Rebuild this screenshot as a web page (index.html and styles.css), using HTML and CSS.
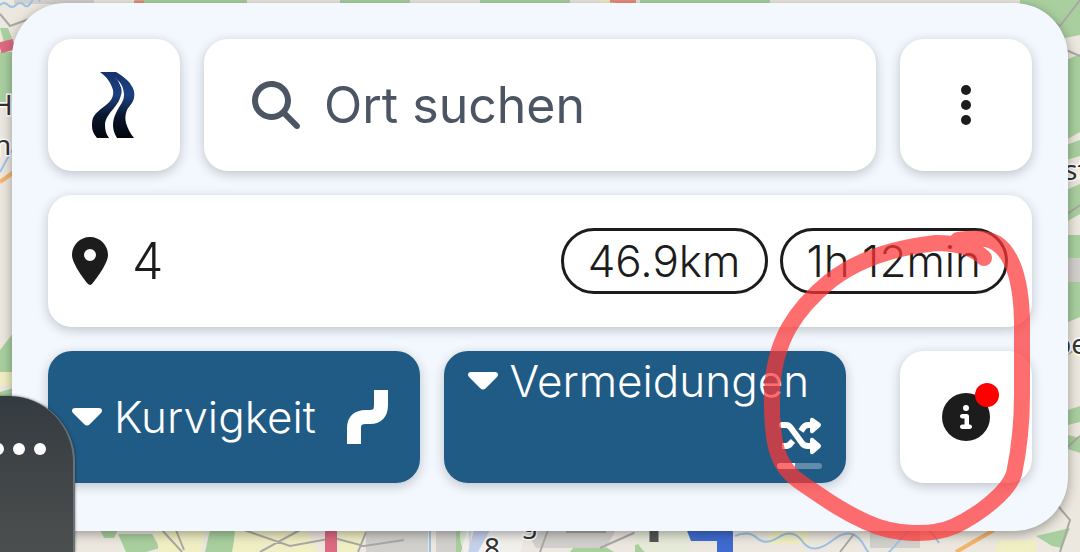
FILE: index.html
```html
<!DOCTYPE html>
<html lang="de">
<head>
    <meta charset="UTF-8">
    <meta name="viewport" content="width=device-width, initial-scale=1.0">
    <title>Routenplaner</title>
    <link rel="stylesheet" href="styles.css">
</head>
<body>
    <svg class="map" viewBox="0 0 1080 552" preserveAspectRatio="none" aria-hidden="true">
        <rect width="1080" height="552" fill="#ece8df"/>
        <!-- woods -->
        <g fill="#a9cf9f">
            <path d="M0 52h14v50H0zM0 350l14-18v48l-14-8zM0 392l14-4v20H0zM0 28l8 0 4 10-8 4z"/>
            <path d="M135 0h112v6H135zM340 0h70v6h-70zM480 0h90v6h-90zM640 0h130v6H640z"/>
            <path d="M1020 0h60v35l-20 4-12-18-28-14zM1066 60l14-6v78l-14 8zM1066 145l14-5v16l-14 4zM1066 190l14-6v30l-14 8zM1066 235h14v82l-14 6zM1068 410l12-4v16l-12 3zM1068 435l12 3v15l-12-4zM1036 536l34-8-8 20-10-2z"/>
            <path d="M100 530h18l-4 8h-10zM118 534h34l8 14-14 4h-20zM210 530h25l-2 22h-28zM270 530h28l-10 10-18-2zM455 530h12l-6 22h-8zM570 552l8-10 26 4 10 6zM635 545l30-8 20 15h-50z"/>
        </g>
        <g fill="#f0efc4">
            <path d="M155 530h50l-4 22h-42zM236 530h70l12 22h-86zM340 530h26l-8 22h-20zM650 530h28l8 16-30 2zM770 530h38v14h-40zM1000 540h36v12h-42z"/>
            <path d="M0 372h14v14H0zM1072 170h8v10h-8zM1072 345h8v12h-8zM600 0h28v5h-28z"/>
        </g>
        <g fill="#d2d0cc">
            <path d="M366 530h62v22h-62zM436 530h20v22h-20zM526 530h90l-10 18h-70zM870 530h50v18h-50zM14 0h80v4H14zM1068 258h12v24h-12z"/>
        </g>
        <!-- water -->
        <g fill="none" stroke="#9cc1e6" stroke-width="2">
            <path d="M0 5q4-4 8 0t8 0 8 0 8-4 8 1"/>
            <path d="M735 536q14-6 22 2t22-1 24 5 30-2 32 7 34-6 40 2"/>
            <path d="M430 530v22M0 172l12-22"/>
        </g>
        <!-- minor roads -->
        <g fill="none" stroke="#aaa8a5" stroke-width="2">
            <path d="M0 14l10 12 22-8M162 530l20 22M176 530l8 20M244 530l46 16 44-8 30 8 40-6M366 532l-8 20M300 530l-40 22M470 530v22M548 530l-8 22M566 532h40M600 548l36-16M840 552l14-18M1058 506l12 14-10 32M1066 355l14-8M1066 215l14-10M1066 50l14 6M1064 450l16-14M1040 14l20 12 20-26"/>
        </g>
        <!-- main roads -->
        <path d="M331 528v24" stroke="#dc6a80" stroke-width="12"/>
        <path d="M0 48l14-4" stroke="#dc6a80" stroke-width="11"/>
        <path d="M134 3h10M610 0l26 2" stroke="#ec8d7b" stroke-width="5"/>
        <path d="M956 552l38-22M0 182l14-10" stroke="#f2b56c" stroke-width="4"/>
        <circle cx="492" cy="536" r="32" fill="#f4f3f2" opacity=".7"/>
        <path d="M474 530l-6 22h10l12-22z" fill="#c5d0ea"/>
        <circle cx="666" cy="528" r="32" fill="#e6ead8"/>
        <path d="M654 528v14" stroke="#555" stroke-width="9"/>
        <path d="M686 528h42q5 0 5 5v19h-16v-11h-26z" fill="#3f6bd0"/>
        <!-- place names -->
        <g class="map-labels">
            <text x="-8" y="115">H</text>
            <text x="-6" y="155">n</text>
            <text x="1064" y="180">st</text>
            <text x="1054" y="354">be</text>
            <text x="484" y="558">8</text>
            <text x="521" y="532">g</text>
        </g>
    </svg>

    <main class="panel">
        <div class="row">
            <button class="card square" aria-label="Startseite">
                <svg width="44" height="66" viewBox="0 0 44 66" aria-hidden="true">
                    <defs>
                        <linearGradient id="road" gradientUnits="userSpaceOnUse" x1="0" y1="0" x2="0" y2="66">
                            <stop offset="0" stop-color="#17336e"/>
                            <stop offset=".35" stop-color="#1d4080"/>
                            <stop offset=".65" stop-color="#0b1730"/>
                            <stop offset="1" stop-color="#02050b"/>
                        </linearGradient>
                    </defs>
                    <path fill="url(#road)" d="M8 0H24C32 5 37 9 39 13C42 17 43 21 42 26C41 31 37 34 35 38C33 43 33 47 34 51C36 57 38 61 42 66H25C22 61 21 57 21 53C21 49 22 45 24 41C27 34 32 30 32 23C32 15 28 9 22 5C26 8 27 10 28 13C30 17 30 20 29 23C28 28 25 32 22 36C17 42 13 47 13 53C13 58 14 62 17 66H5C2 62 0 59 0 54C0 51 0 49 1 46C3 41 9 37 14 33C19 29 22 25 21 18C19 11 15 5 8 0Z"/>
                </svg>
            </button>
            <label class="card search">
                <svg width="48" height="48" viewBox="0 0 512 512" fill="#4b5563" aria-hidden="true">
                    <path d="M416 208c0 45.900-14.900 88.300-40 122.700L502.600 457.400c12.500 12.500 12.500 32.800 0 45.300s-32.800 12.500-45.300 0L330.700 376c-34.400 25.200-76.800 40-122.700 40C93.100 416 0 322.900 0 208S93.100 0 208 0S416 93.100 416 208zM208 352a144 144 0 1 0 0-288 144 144 0 1 0 0 288z"/>
                </svg>
                <input type="text" placeholder="Ort suchen" aria-label="Ort suchen">
            </label>
            <button class="card square" aria-label="Menü">
                <svg width="12" height="40" viewBox="0 0 12 40" fill="#1c1c1c" aria-hidden="true">
                    <circle cx="6" cy="5" r="5"/>
                    <circle cx="6" cy="20" r="5"/>
                    <circle cx="6" cy="35" r="5"/>
                </svg>
            </button>
        </div>

        <div class="card route">
            <svg width="36" height="48" viewBox="0 0 384 512" fill="#1c1c1c" aria-hidden="true">
                <path d="M215.700 499.200C267 435 384 279.400 384 192C384 86 298 0 192 0S0 86 0 192c0 87.400 117 243 168.300 307.200c12.300 15.300 35.100 15.300 47.400 0zM192 128a64 64 0 1 1 0 128 64 64 0 1 1 0-128z"/>
            </svg>
            <span class="count">4</span>
            <span class="pill">46.9km</span>
            <span class="pill">1h 12min</span>
        </div>

        <div class="row">
            <div class="filters">
                <button class="card filter">
                    <svg width="30" height="18" viewBox="0 0 30 18" fill="#fff" aria-hidden="true">
                        <path d="M3 0H27Q30 0 30 3Q30 4 28 6L18 16Q15 19 12 16L2 6Q0 4 0 3Q0 0 3 0Z"/>
                    </svg>
                    <span>Kurvigkeit</span>
                    <svg class="mode" width="44" height="54" viewBox="0 0 44 54" fill="none" aria-hidden="true">
                        <path d="M8 54V38Q8 27 20 27H24Q35 27 35 15V0" stroke="#fff" stroke-width="14"/>
                    </svg>
                </button>
                <button class="card filter stacked">
                    <svg width="30" height="18" viewBox="0 0 30 18" fill="#fff" aria-hidden="true">
                        <path d="M3 0H27Q30 0 30 3Q30 4 28 6L18 16Q15 19 12 16L2 6Q0 4 0 3Q0 0 3 0Z"/>
                    </svg>
                    <span>Vermeidungen</span>
                    <span class="avoid">
                        <svg width="44" height="38" viewBox="0 0 44 38" aria-hidden="true">
                            <g fill="none" stroke="#fff" stroke-width="6" stroke-linecap="round" stroke-linejoin="round">
                                <path d="M4 8H8Q11 8 13 11L24 26Q26 29 30 29H34"/>
                                <path d="M4 29H8Q11 29 13 26L15 24" stroke-linecap="butt"/>
                                <path d="M23 14L25 11Q27 8 30 8H34" stroke-linecap="butt"/>
                            </g>
                            <path fill="#fff" d="M32 3Q32 0 35 1L42 6Q44 8 42 10L35 16Q32 17 32 14ZM32 23Q32 20 35 21L42 27Q44 29 42 31L35 37Q32 38 32 35Z"/>
                        </svg>
                        <span class="level"><span class="level-fill"></span></span>
                    </span>
                </button>
            </div>
            <button class="card square" aria-label="Informationen">
                <span class="info">
                    <svg width="48" height="48" viewBox="0 0 512 512" aria-hidden="true">
                        <circle cx="256" cy="256" r="256" fill="#1c1c1c"/>
                        <path fill="#fff" d="M216 336h24V272H216c-13.300 0-24-10.700-24-24s10.700-24 24-24h48c13.300 0 24 10.700 24 24v88h8c13.300 0 24 10.700 24 24s-10.700 24-24 24H216c-13.300 0-24-10.700-24-24s10.700-24 24-24zM256 128a32 32 0 1 1 0 64 32 32 0 1 1 0-64z"/>
                    </svg>
                    <span class="badge"></span>
                </span>
            </button>
        </div>
    </main>

    <!-- floating side handle -->
    <div class="handle">
        <span class="dot"></span>
        <span class="dot"></span>
        <span class="dot"></span>
    </div>

    <!-- marker stroke around the info button -->
    <svg class="marker" viewBox="0 0 1080 552" preserveAspectRatio="none" aria-hidden="true">
        <path d="M984 258C975 249 958 243 936 243C900 247 862 256 830 281C796 309 774 340 772 392C771 448 778 468 803 484C828 501 842 511 866 522C896 536 932 536 955 526C980 514 1008 492 1014 474C1019 450 1022 420 1022 395V320C1021 282 1013 254 996 243C986 237 970 238 958 240"/>
    </svg>
</body>
</html>
```
FILE: styles.css
```css
* {
    box-sizing: border-box;
}

body {
    margin: 0;
    min-height: 100vh;
    padding: 3px 12px 21px;
    position: relative;
    overflow: hidden;
    font-family: Inter, "Noto Sans", sans-serif;
    font-weight: 300;
    color: #1c1c1c;
}

button,
input {
    font: inherit;
    color: inherit;
    border: none;
}

button {
    cursor: pointer;
}

svg {
    flex-shrink: 0;
}

.map,
.marker {
    position: absolute;
    top: 0;
    left: 0;
    width: 100%;
    height: 100%;
}

.map {
    z-index: -1;
}

.map-labels {
    font-family: "Noto Sans", sans-serif;
    font-size: 28px;
    font-weight: 400;
    fill: #333;
    stroke: #fff;
    stroke-width: 3px;
    paint-order: stroke;
}

.marker {
    pointer-events: none;
}

.marker path {
    fill: none;
    stroke: rgba(255, 54, 54, 0.72);
    stroke-width: 16px;
    stroke-linecap: round;
    stroke-linejoin: round;
}

.panel {
    display: flex;
    flex-direction: column;
    gap: 24px;
    padding: 36px 36px 48px;
    background-color: #f3f8ff;
    border-radius: 54px;
    box-shadow: 0 3px 12px rgba(0, 0, 0, 0.35);
}

.row {
    display: flex;
    gap: 24px;
}

.card {
    height: 132px;
    background-color: #fff;
    border-radius: 24px;
    box-shadow: 0 3px 12px rgba(0, 0, 0, 0.22);
}

.square {
    display: flex;
    flex: 0 0 132px;
    align-items: center;
    justify-content: center;
    padding: 0;
}

.search {
    display: flex;
    flex: 1;
    align-items: center;
    gap: 24px;
    min-width: 0;
    padding: 0 48px;
    font-size: 50px;
    font-weight: 400;
    color: #4b5563;
}

.search input {
    flex: 1;
    min-width: 0;
    padding: 0;
    background: none;
    outline: none;
}

.search input::placeholder {
    color: #4b5563;
    opacity: 1;
}

.route {
    display: flex;
    align-items: center;
    gap: 12px;
    padding: 0 24px;
}

.count {
    margin-right: auto;
    padding-left: 12px;
    font-size: 50px;
}

.pill {
    padding: 0 24px;
    border: 3px solid #1c1c1c;
    border-radius: 33px;
    font-size: 44px;
    line-height: 60px;
}

.filters {
    display: grid;
    flex: 1;
    grid-template-columns: 12fr 13fr;
    gap: 24px;
    margin-right: 30px;
}

.filter {
    display: flex;
    align-items: center;
    gap: 12px;
    padding: 0 24px;
    background-color: #1f5b85;
    color: #fff;
    font-size: 44px;
    line-height: 60px;
}

.mode {
    margin: 0 6px 0 auto;
}

.stacked {
    flex-wrap: wrap;
    align-content: flex-start;
    row-gap: 6px;
}

.avoid {
    display: flex;
    flex: 0 0 100%;
    flex-direction: column;
    align-items: flex-end;
    gap: 8px;
}

.level {
    width: 45px;
    height: 6px;
    border-radius: 3px;
    background-color: rgba(255, 255, 255, 0.3);
    overflow: hidden;
}

.level-fill {
    display: block;
    width: 40%;
    height: 100%;
    background-color: #fff;
}

.info {
    position: relative;
    display: flex;
}

.badge {
    position: absolute;
    top: -10px;
    right: -9px;
    width: 24px;
    height: 24px;
    border-radius: 50%;
    background-color: #f00;
}

.handle {
    position: absolute;
    left: -75px;
    bottom: 0;
    display: flex;
    justify-content: flex-end;
    gap: 9px;
    width: 150px;
    height: 156px;
    padding: 47px 27px 0 0;
    border-right: 2px solid #6b7177;
    border-radius: 66px 66px 0 0;
    background: linear-gradient(#343b40, #4c4f4f);
    box-shadow: 0 0 3px rgba(0, 0, 0, 0.5);
}

.dot {
    width: 12px;
    height: 12px;
    border-radius: 50%;
    background-color: #fff;
}
```
